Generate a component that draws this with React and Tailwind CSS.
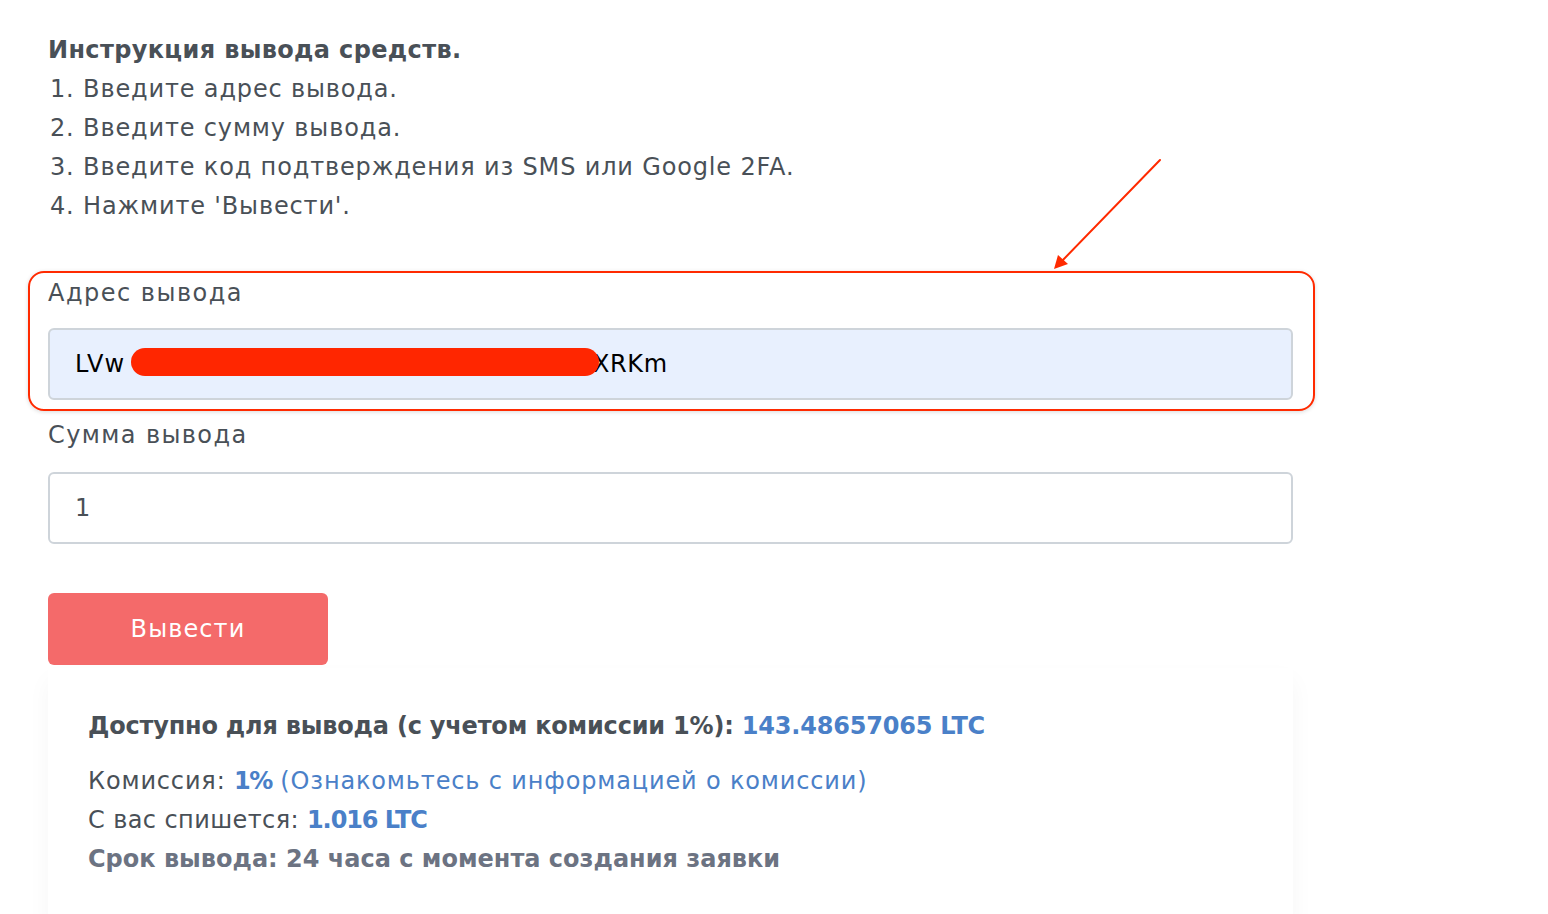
import React from 'react';

const steps = [
    '1. Введите адрес вывода.',
    '2. Введите сумму вывода.',
    '3. Введите код подтверждения из SMS или Google 2FA.',
    "4. Нажмите 'Вывести'.",
];

const Arrow = () => (
    <svg className="absolute left-[1040px] top-[150px]" width="130" height="130" viewBox="0 0 130 130">
        <line x1="120" y1="10" x2="20" y2="113" stroke="#ff2a00" strokeWidth="2" strokeLinecap="round" />
        <path d="M14 119 L18 105 L28 114 Z" fill="#ff2a00" />
    </svg>
);

const App = () => (
    <div className="relative min-h-screen bg-white text-[24px] tracking-[0.85px] text-[#495057]" style={{ fontFamily: '"DejaVu Sans", "Liberation Sans", sans-serif' }}>
        <Arrow />
        <div className="w-[1245px] ml-[48px] pt-[31px]">
            <div className="leading-[39px]">
                <p className="font-bold tracking-[0.35px]">Инструкция вывода средств.</p>
                {steps.map((s, i) => (
                    <p key={i} className="pl-[2px]">{s}</p>
                ))}
            </div>

            <div className="relative mt-[48px]">
                <div className="absolute -left-[20px] -right-[22px] -top-[3px] -bottom-[11px] rounded-[16px] border-2 border-[#ff2a00] shadow-[0_1px_4px_rgba(0,0,0,0.15)]" />
                <label className="block leading-[39px] tracking-[1.5px]">Адрес вывода</label>
                <div className="relative mt-[15px] h-[72px] rounded-md border-2 border-[#ced4da] bg-[#e8f0fe] flex items-center pl-[25px] text-black tracking-[1.2px]">
                    <span className="w-[518px]">LVw</span>
                    <span className="tracking-[0.6px]">XRKm</span>
                    <span className="absolute left-[81px] top-[18px] w-[468px] h-[28px] rounded-full bg-[#ff2600]" />
                </div>
            </div>

            <label className="block mt-[16px] leading-[39px] tracking-[1.4px]">Сумма вывода</label>
            <div className="mt-[17px] h-[72px] rounded-md border-2 border-[#ced4da] bg-white flex items-center pl-[25px]">
                1
            </div>

            <button className="mt-[49px] w-[280px] h-[72px] rounded-md bg-[#f46a6a] text-white tracking-[1.1px]">
                Вывести
            </button>

            <div className="mt-[3px] bg-white shadow-[0_12px_24px_rgba(18,38,63,0.04)] rounded-sm px-[40px] pt-[39px] pb-[40px] leading-[39px]">
                <p className="font-bold tracking-[-0.2px] mb-[16px]">
                    Доступно для вывода (с учетом комиссии 1%): <span className="text-[#4a80c8]">143.48657065 LTC</span>
                </p>
                <p>
                    Комиссия: <span className="font-bold tracking-[-1.5px] text-[#4a80c8]">1%</span>{' '}
                    <span className="text-[#4a80c8]">(Ознакомьтесь с информацией о комиссии)</span>
                </p>
                <p>
                    <span className="tracking-[0.4px]">С вас спишется: </span>
                    <span className="font-bold tracking-[-1.1px] text-[#4a80c8]">1.016 LTC</span>
                </p>
                <p className="font-semibold tracking-normal text-[#6c7382]">Срок вывода: 24 часа с момента создания заявки</p>
            </div>
        </div>
    </div>
);

export default App;
